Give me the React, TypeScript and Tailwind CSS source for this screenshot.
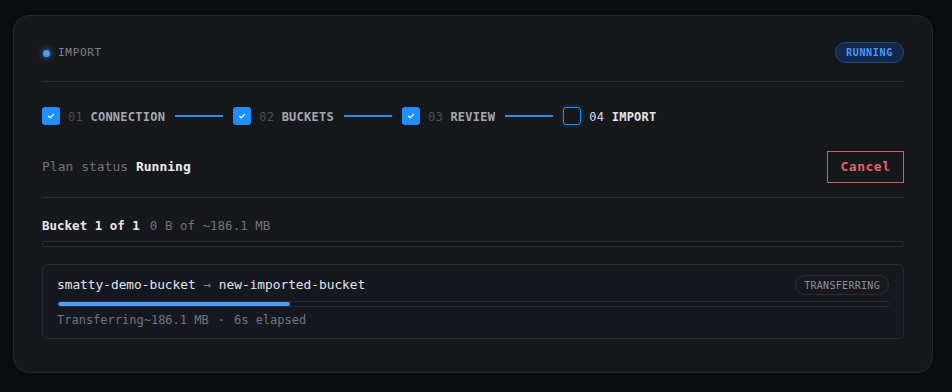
import React from "react";

const mono = { fontFamily: '"DejaVu Sans Mono", "Liberation Mono", monospace' };

type Step = { num: string; label: string; done: boolean };

const steps: Step[] = [
  { num: "01", label: "CONNECTION", done: true },
  { num: "02", label: "BUCKETS", done: true },
  { num: "03", label: "REVIEW", done: true },
  { num: "04", label: "IMPORT", done: false },
];

const Check = () => (
  <svg width="8" height="8" viewBox="0 0 8 8" fill="none">
    <path d="M1.5 4.2 L3.2 5.8 L6.5 2.4" stroke="white" strokeWidth="1.2" strokeLinecap="round" strokeLinejoin="round" />
  </svg>
);

export default function App() {
  return (
    <div className="min-h-screen bg-[#0b0c0f] pl-[13px] pt-[15px]" style={mono}>
      <div className="w-[920px] rounded-[16px] border border-[#26272d] bg-[#17181c] px-[28px] pt-[26px] pb-[33px]">
        {/* header */}
        <div className="flex h-[21px] items-center justify-between">
          <div className="mt-[2px] flex items-center gap-[8px] pl-[1px]">
            <span className="h-[7px] w-[7px] rounded-full bg-[#4b9dff] shadow-[0_0_6px_#3b8cff]" />
            <span className="text-[11px] tracking-[0.7px] text-[#7d818a]">IMPORT</span>
          </div>
          <span className="flex h-[21px] items-center rounded-full border border-[#1f4a82] bg-[#13284a] px-[10px] text-[10px] font-bold tracking-[0.7px] text-[#4b9dff]">
            RUNNING
          </span>
        </div>

        <div className="mt-[18px] h-px bg-[#2a2b31]" />

        {/* steps */}
        <div className="mt-[25px] flex h-[18px] items-center">
          {steps.map((s, i) => (
            <React.Fragment key={s.num}>
              <div className="flex items-center gap-[8px]">
                {s.done ? (
                  <span className="flex h-[18px] w-[18px] items-center justify-center rounded-[3px] bg-[#1f8fff]">
                    <Check />
                  </span>
                ) : (
                  <span className="h-[18px] w-[18px] rounded-[3px] border border-[#1f8fff] shadow-[0_0_4px_rgba(31,143,255,0.35)]" />
                )}
                <span className="mt-[1px] text-[12px] tracking-[0.25px]">
                  <span className={s.done ? "text-[#4a4e57]" : "text-[#d8dbe0]"}>{s.num}</span>{" "}
                  <span className={s.done ? "font-semibold text-[#a3a8b2]" : "font-semibold text-[#e4e6ea]"}>{s.label}</span>
                </span>
              </div>
              {i < steps.length - 1 && <div className="mx-[10px] h-[2px] w-[48px] bg-[#2b8cf0]" />}
            </React.Fragment>
          ))}
        </div>

        {/* plan status */}
        <div className="mt-[26px] flex items-center justify-between">
          <div className="text-[13px]">
            <span className="text-[#6f737c]">Plan status</span>{" "}
            <span className="font-bold text-[#eceef2]">Running</span>
          </div>
          <button className="flex h-[32px] w-[77px] items-center justify-center border border-[#e05a5a] text-[13px] font-semibold tracking-[0.5px] text-[#e06464]">
            Cancel
          </button>
        </div>

        <div className="mt-[14px] h-px bg-[#2a2b31]" />

        {/* bucket progress */}
        <div className="mt-[19px] flex items-center gap-[10px] text-[12.5px] leading-[18px]">
          <span className="font-bold text-[#e6e8ec]">Bucket 1 of 1</span>
          <span className="text-[#6f737c]">0 B of ~186.1 MB</span>
        </div>
        <div className="mt-[6px] h-[6px] rounded-full border border-[#2a2c33] bg-[#141519]" />

        {/* bucket card */}
        <div className="mt-[17px] rounded-[6px] border border-[#272932] bg-[#161820] px-[14px] pt-[10px] pb-[10px]">
          <div className="flex h-[20px] items-center justify-between">
            <span className="text-[12.8px] text-[#e2e4e9]">
              smatty-demo-bucket <span className="text-[#7d818a]">→</span> new-imported-bucket
            </span>
            <span className="flex h-[20px] items-center rounded-full border border-[#2b2d35] bg-[#17191f] px-[8px] text-[10px] tracking-[0.3px] text-[#8c9099]">
              TRANSFERRING
            </span>
          </div>
          <div className="mt-[6px] h-[6px] overflow-hidden rounded-full border border-[#2a2c33] bg-[#13151a]">
            <div className="h-full rounded-full bg-[#4b9dff]" style={{ width: "28%" }} />
          </div>
          <div className="mt-[5px] flex items-center text-[12px] leading-[16px] text-[#71757e]">
            <span>Transferring~186.1 MB</span>
            <span className="mx-[9px]">·</span>
            <span>6s elapsed</span>
          </div>
        </div>
      </div>
    </div>
  );
}
